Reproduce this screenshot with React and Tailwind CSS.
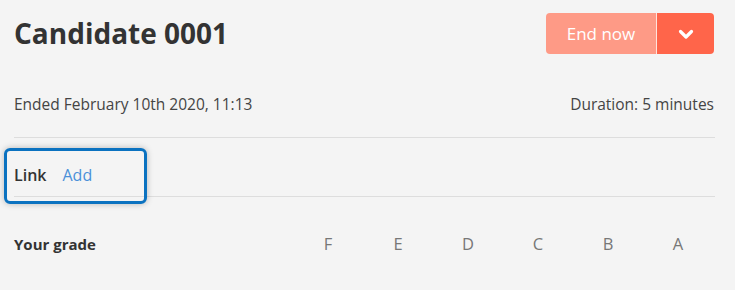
import React from "react";

export default function App() {
  const grades = ["F", "E", "D", "C", "B", "A"];
  return (
    <div className="w-[735px] h-[290px] bg-[#f4f4f4] overflow-hidden" style={{ fontFamily: '"Open Sans", sans-serif' }}>
      <div className="px-[14px]">
        <div className="flex items-center justify-between pt-[13px] pr-[7px]">
          <h1 className="text-[28px] font-bold text-[#333333] leading-[41px]">Candidate 0001</h1>
          <div className="flex h-[41px] rounded-[4px] overflow-hidden">
            <button className="w-[110px] bg-[#fe9a86] text-white text-[17px] leading-[41px]">End now</button>
            <div className="w-px bg-[#ffe3dc]" />
            <button className="w-[57px] bg-[#ff654a] flex items-center justify-center">
              <svg width="16" height="12" viewBox="0 0 16 12" fill="none">
                <path d="M2.5 3.5 L8 9 L13.5 3.5" stroke="white" strokeWidth="3.2" strokeLinecap="round" strokeLinejoin="round" />
              </svg>
            </button>
          </div>
        </div>
        <div className="flex justify-between items-center mt-[40px] pr-[7px] text-[15.5px] leading-[20px] text-[#444444]">
          <span>Ended February 10th 2020, 11:13</span>
          <span>Duration: 5 minutes</span>
        </div>
        <div className="mt-[23px] mr-[6px] border-t border-[#dddddd]" />
        <div className="relative flex items-center gap-[16px] pt-[27px] pb-[11px] text-[16px] leading-[20px]">
          <div className="absolute left-[-10px] top-[10px] w-[143px] h-[56px] rounded-[6px] border-[3px] border-[#0b72c0] shadow-[0_0_6px_rgba(0,0,0,0.25)]" />
          <span className="font-semibold text-[#333333]">Link</span>
          <span className="text-[#4a90d9]">Add</span>
        </div>
        <div className="mr-[6px] border-t border-[#dddddd]" />
        <div className="flex items-center pt-[37px] text-[15px] leading-[20px]">
          <span className="font-bold text-[#333333] w-[279px]">Your grade</span>
          <div className="flex">
            {grades.map((g) => (
              <span key={g} className="w-[70px] text-center text-[16.5px] text-[#777777]">{g}</span>
            ))}
          </div>
        </div>
      </div>
    </div>
  );
}
